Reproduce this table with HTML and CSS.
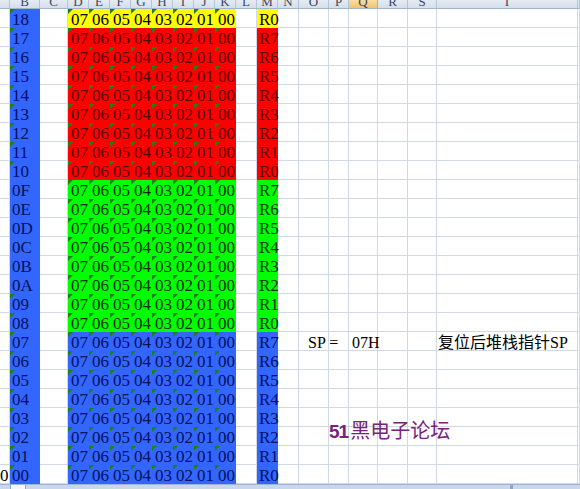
FILE: index.html
```html
<!DOCTYPE html>
<html lang="zh">
<head>
<meta charset="utf-8">
<title>Sheet</title>
<link rel="stylesheet" href="styles.css">
</head>
<body>
<div class="sheet">
  <div class="hdr">
    <span></span><span>B</span><span>C</span><span>D</span><span>E</span><span>F</span><span>G</span><span>H</span><span>I</span><span>J</span><span>K</span><span>L</span><span>M</span><span>N</span><span>O</span><span>P</span><span class="sel">Q</span><span>R</span><span>S</span><span>T</span><span></span>
  </div>
  <div class="body">
    <div class="lines">
      <s></s><s></s><s></s><s></s><s></s><s></s><s></s><s></s><s></s><s></s><s></s><s></s><s></s><s></s><s></s><s></s><s></s><s></s><s></s><s></s><s></s>
    </div>
    <div class="rows">
      <div class="row y"><em class="t">18</em><i>07</i><i>06</i><i>05</i><i>04</i><i>03</i><i>02</i><i>01</i><i>00</i><span class="m">R0</span></div>
      <div class="row r"><em class="t">17</em><i>07</i><i>06</i><i>05</i><i>04</i><i>03</i><i>02</i><i>01</i><i>00</i><span class="m">R7</span></div>
      <div class="row r"><em class="t">16</em><i>07</i><i>06</i><i>05</i><i>04</i><i>03</i><i>02</i><i>01</i><i>00</i><span class="m">R6</span></div>
      <div class="row r"><em class="t">15</em><i>07</i><i>06</i><i>05</i><i>04</i><i>03</i><i>02</i><i>01</i><i>00</i><span class="m">R5</span></div>
      <div class="row r"><em class="t">14</em><i>07</i><i>06</i><i>05</i><i>04</i><i>03</i><i>02</i><i>01</i><i>00</i><span class="m">R4</span></div>
      <div class="row r"><em class="t">13</em><i>07</i><i>06</i><i>05</i><i>04</i><i>03</i><i>02</i><i>01</i><i>00</i><span class="m">R3</span></div>
      <div class="row r"><em class="t">12</em><i>07</i><i>06</i><i>05</i><i>04</i><i>03</i><i>02</i><i>01</i><i>00</i><span class="m">R2</span></div>
      <div class="row r"><em class="t">11</em><i>07</i><i>06</i><i>05</i><i>04</i><i>03</i><i>02</i><i>01</i><i>00</i><span class="m">R1</span></div>
      <div class="row r"><em class="t">10</em><i>07</i><i>06</i><i>05</i><i>04</i><i>03</i><i>02</i><i>01</i><i>00</i><span class="m">R0</span></div>
      <div class="row g"><em>0F</em><i>07</i><i>06</i><i>05</i><i>04</i><i>03</i><i>02</i><i>01</i><i>00</i><span class="m">R7</span></div>
      <div class="row g"><em>0E</em><i>07</i><i>06</i><i>05</i><i>04</i><i>03</i><i>02</i><i>01</i><i>00</i><span class="m">R6</span></div>
      <div class="row g"><em>0D</em><i>07</i><i>06</i><i>05</i><i>04</i><i>03</i><i>02</i><i>01</i><i>00</i><span class="m">R5</span></div>
      <div class="row g"><em>0C</em><i>07</i><i>06</i><i>05</i><i>04</i><i>03</i><i>02</i><i>01</i><i>00</i><span class="m">R4</span></div>
      <div class="row g"><em>0B</em><i>07</i><i>06</i><i>05</i><i>04</i><i>03</i><i>02</i><i>01</i><i>00</i><span class="m">R3</span></div>
      <div class="row g"><em>0A</em><i>07</i><i>06</i><i>05</i><i>04</i><i>03</i><i>02</i><i>01</i><i>00</i><span class="m">R2</span></div>
      <div class="row g"><em class="t">09</em><i>07</i><i>06</i><i>05</i><i>04</i><i>03</i><i>02</i><i>01</i><i>00</i><span class="m">R1</span></div>
      <div class="row g"><em class="t">08</em><i>07</i><i>06</i><i>05</i><i>04</i><i>03</i><i>02</i><i>01</i><i>00</i><span class="m">R0</span></div>
      <div class="row b"><em class="t">07</em><i>07</i><i>06</i><i>05</i><i>04</i><i>03</i><i>02</i><i>01</i><i>00</i><span class="m">R7</span><span class="sp">SP =</span><span class="h">07H</span><span class="cn">复位后堆栈指针SP</span></div>
      <div class="row b"><em class="t">06</em><i>07</i><i>06</i><i>05</i><i>04</i><i>03</i><i>02</i><i>01</i><i>00</i><span class="m">R6</span></div>
      <div class="row b"><em class="t">05</em><i>07</i><i>06</i><i>05</i><i>04</i><i>03</i><i>02</i><i>01</i><i>00</i><span class="m">R5</span></div>
      <div class="row b"><em class="t">04</em><i>07</i><i>06</i><i>05</i><i>04</i><i>03</i><i>02</i><i>01</i><i>00</i><span class="m">R4</span></div>
      <div class="row b"><em class="t">03</em><i>07</i><i>06</i><i>05</i><i>04</i><i>03</i><i>02</i><i>01</i><i>00</i><span class="m">R3</span></div>
      <div class="row b"><em class="t">02</em><i>07</i><i>06</i><i>05</i><i>04</i><i>03</i><i>02</i><i>01</i><i>00</i><span class="m">R2</span></div>
      <div class="row b"><em class="t">01</em><i>07</i><i>06</i><i>05</i><i>04</i><i>03</i><i>02</i><i>01</i><i>00</i><span class="m">R1</span></div>
      <div class="row b"><span class="a">0</span><em class="t">00</em><i>07</i><i>06</i><i>05</i><i>04</i><i>03</i><i>02</i><i>01</i><i>00</i><span class="m">R0</span></div>
    </div>
    <div class="mark"><b>51</b>黑电子论坛</div>
  </div>
  <div class="tabs"><span class="tab"></span><span class="split"></span></div>
</div>
</body>
</html>
```

FILE: styles.css
```css
* { box-sizing: border-box; margin: 0; padding: 0; }

:root {
  --cols: 10px 30px 28px repeat(11, 21px) 30px 20px 29px 30px 29px 141px 2px;
  --grid: #d0d7e5;
}

body {
  margin: 0;
  width: 580px;
  height: 489px;
  overflow: hidden;
  background: #fff;
  font-family: "Liberation Serif", "Noto Sans CJK SC", serif;
}

.sheet {
  display: flex;
  flex-direction: column;
  height: 489px;
}

.hdr {
  display: grid;
  grid-template-columns: var(--cols);
  height: 9px;
  background: linear-gradient(#e4ebf5, #d5deea);
  border-bottom: 1px solid #9eb6ce;
}

.hdr span {
  display: flex;
  align-items: flex-end;
  justify-content: center;
  overflow: hidden;
  border-right: 1px solid #b5c5d8;
  font: 13px/12px "Liberation Serif", serif;
  color: #3a475a;
}

.hdr span.sel {
  background: linear-gradient(#f9dca6, #f2c467);
  border-right-color: #e2a84a;
}

.body {
  display: grid;
  height: 475px;
  position: relative;
}

.body > .lines,
.body > .rows {
  grid-area: 1 / 1;
}

.lines {
  display: grid;
  grid-template-columns: var(--cols);
}

.lines s {
  border-right: 1px solid var(--grid);
  background: repeating-linear-gradient(to bottom, transparent 0 18px, var(--grid) 18px 19px);
}

.rows {
  display: flex;
  flex-direction: column;
}

.row {
  display: grid;
  grid-template-columns: var(--cols);
  grid-template-rows: 19px;
  height: 19px;
  font-size: 17px;
  line-height: 21px;
  white-space: nowrap;
}

.row i,
.row em,
.row span {
  font-style: normal;
  position: relative;
  padding-left: 3px;
}

.row em {
  grid-column: 2;
  padding-left: 2px;
  background: #3366ff;
  color: #00105c;
}

.row i:first-of-type { grid-column: 4; }

.row .m {
  grid-column: 13;
  padding-left: 2px;
}

.row .a {
  grid-column: 1;
  padding-left: 0;
  color: #000;
}

.row i::before,
.row em.t::before {
  content: "";
  position: absolute;
  left: 0;
  top: 0;
  border-top: 5px solid #1d7f1d;
  border-right: 5px solid transparent;
}

.row.y i, .row.y .m { background: #ffff00; color: #000; }
.row.r i, .row.r .m { background: #ff0000; color: #580000; }
.row.g i, .row.g .m { background: #00ff00; color: #003000; }
.row.b i, .row.b .m { background: #3366ff; color: #00105c; }

.row .sp {
  grid-column: 15;
  padding-left: 9px;
  color: #000;
  font-size: 16px;
}

.row .h {
  grid-column: 17;
  padding-left: 3px;
  color: #000;
  font-size: 16px;
}

.row .cn {
  grid-column: 20;
  padding-left: 1px;
  color: #000;
  font-size: 16px;
  font-family: "Liberation Serif", "Noto Sans CJK SC", serif;
}

.mark {
  position: absolute;
  left: 329px;
  top: 411px;
  font: 20px/20px "Noto Sans CJK SC", sans-serif;
  color: #76237c;
  white-space: nowrap;
}

.mark b {
  font: bold 19px/20px "Liberation Sans", sans-serif;
  letter-spacing: -1px;
  margin-right: 2px;
}

.tabs {
  flex: 1;
  display: flex;
  align-items: flex-start;
  background: #c9d7ea;
  border-top: 1px solid #9fb5d1;
  padding-left: 10px;
}

.tab {
  width: 16px;
  height: 4px;
  background: #f4f7fb;
  border-left: 1px solid #8fa7c6;
  border-right: 1px solid #8fa7c6;
}

.split {
  margin-left: 484px;
  width: 3px;
  height: 4px;
  background: #8ea6c4;
}
```
